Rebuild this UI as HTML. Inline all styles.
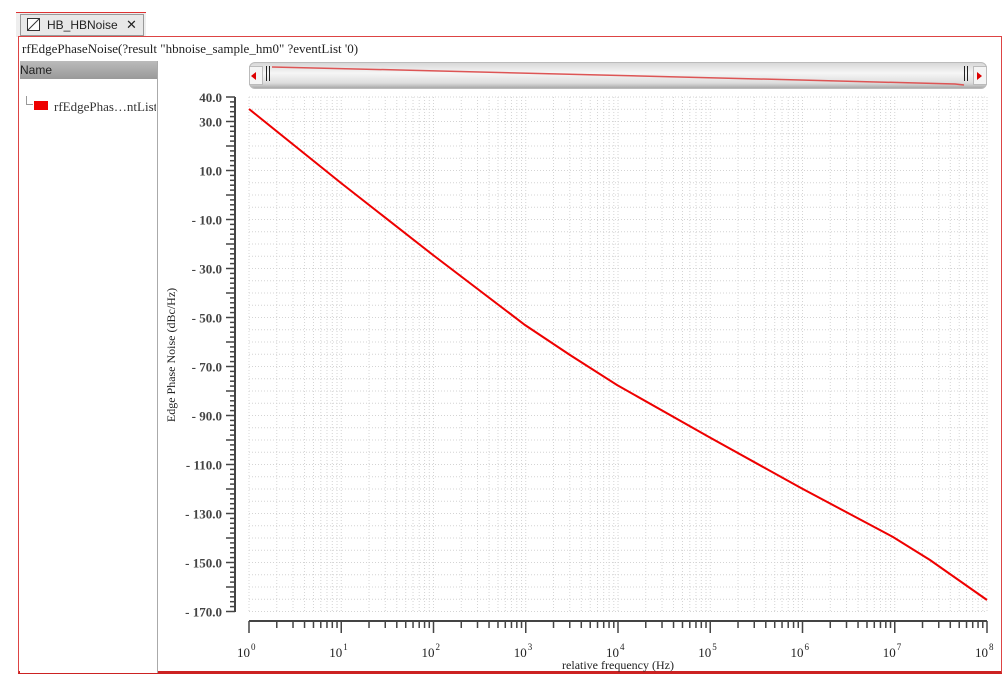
<!DOCTYPE html>
<html><head><meta charset="utf-8"><style>
body{margin:0;width:1003px;height:689px;background:#fff;overflow:hidden;font-family:"Liberation Serif",serif;position:relative}
.abs{position:absolute}
</style></head><body>
<div class="abs" style="left:0;top:0;width:1003px;height:38px;background:#fff"></div>
<div class="abs" style="left:16px;top:12px;width:130px;height:24px;border-top:1px solid #d33;background:#eee"></div>
<div class="abs" style="left:20px;top:14px;width:122px;height:20px;border:1px solid #999;background:#e8e8e8;font:12px 'Liberation Sans',sans-serif;color:#222">
 <svg class="abs" style="left:6px;top:3px" width="13" height="13"><rect x="0.5" y="0.5" width="12" height="12" fill="#fff" stroke="#333"/><path d="M1 12 L12 1" stroke="#333"/></svg>
 <span class="abs" style="left:26px;top:3px">HB_HBNoise</span><span class="abs" style="left:105px;top:2px;font-size:13px">✕</span></div>
<div class="abs" style="left:18px;top:36px;width:984px;height:638px;border:1px solid #d44;border-bottom:3px solid #c22;box-sizing:border-box"></div>
<div class="abs" style="left:22px;top:41px;font-size:13px;color:#222">rfEdgePhaseNoise(?result "hbnoise_sample_hm0" ?eventList '0)</div>
<div class="abs" style="left:20px;top:61px;width:137px;height:612px;border-right:1px solid #aaa;background:#fff"></div>
<div class="abs" style="left:20px;top:61px;width:137px;height:18px;background:linear-gradient(#bbb,#999);font:12px 'Liberation Sans',sans-serif;color:#222;line-height:18px">Name</div>
<div class="abs" style="left:26px;top:96px;width:6px;height:8px;border-left:1px solid #999;border-bottom:1px solid #999"></div>
<div class="abs" style="left:34px;top:101px;width:14px;height:9px;background:#e00"></div>
<div class="abs" style="left:54px;top:99px;font-size:13px;color:#333;width:102px;overflow:hidden;white-space:nowrap">rfEdgePhas…ntList</div>
<div class="abs" style="left:249px;top:62px;width:738px;height:27px;border-radius:6px;background:linear-gradient(#d8d8d8,#f6f6f6 40%,#ddd 80%,#aaa);border:1px solid #bbb;box-sizing:border-box"></div>
<div class="abs" style="left:249px;top:66px;width:14px;height:19px;background:#f4f4f4;border:1px solid #bbb;box-sizing:border-box"></div>
<div class="abs" style="left:251px;top:72px;width:0;height:0;border:4px solid transparent;border-right:5px solid #d00;border-left:0"></div>
<div class="abs" style="left:973px;top:66px;width:14px;height:19px;background:#f4f4f4;border:1px solid #bbb;box-sizing:border-box"></div>
<div class="abs" style="left:977px;top:72px;width:0;height:0;border:4px solid transparent;border-left:5px solid #d00;border-right:0"></div>
<div class="abs" style="left:266px;top:66px;width:2px;height:15px;border-left:1px solid #222;border-right:1px solid #222"></div>
<div class="abs" style="left:964px;top:66px;width:2px;height:15px;border-left:1px solid #222;border-right:1px solid #222"></div>
<svg class="abs" style="left:0;top:0" width="1003" height="689" id="s"></svg>
<script>
var s='',x0=249,dx=92.25,y0=97,dy=2.45;
function X(f){return x0+Math.log10(f)*dx}function Y(v){return y0+(40-v)*dy}
for(var v=40;v>=-170;v-=5)s+='<line x1="249" x2="987" y1="'+Y(v)+'" y2="'+Y(v)+'" stroke="#d4d4d4" stroke-dasharray="1,2"/>';
for(var d=0;d<8;d++)for(var m=1;m<10;m++){var x=X(m*Math.pow(10,d));s+='<line x1="'+x+'" x2="'+x+'" y1="97" y2="612" stroke="#d4d4d4" stroke-dasharray="1,2"/>';}
s+='<line x1="987" x2="987" y1="97" y2="612" stroke="#d4d4d4" stroke-dasharray="1,2"/>';
s+='<line x1="235" x2="235" y1="97" y2="612" stroke="#444" stroke-width="2"/>';
for(var v=40;v>=-170;v-=2){var y=Y(v);s+='<line x1="'+(v%10==0?226:230)+'" x2="235" y1="'+y+'" y2="'+y+'" stroke="#444" stroke-width="1.5"/>';}
var labs=[40,30,10,-10,-30,-50,-70,-90,-110,-130,-150,-170];
labs.forEach(function(v){var t=v>0?v+'.0':'- '+(-v)+'.0';s+='<text x="222" y="'+(Y(v)+5)+'" text-anchor="end" font-size="13" fill="#444" font-family="Liberation Serif" font-weight="bold">'+t+'</text>'});
s+='<line x1="249" x2="987" y1="621" y2="621" stroke="#444" stroke-width="2"/>';
for(var d=0;d<8;d++)for(var m=1;m<10;m++){var x=X(m*Math.pow(10,d));s+='<line x1="'+x+'" x2="'+x+'" y1="621" y2="'+(m==1?633:628)+'" stroke="#444" stroke-width="1.5"/>';}
s+='<line x1="987" x2="987" y1="621" y2="633" stroke="#444" stroke-width="1.5"/>';
for(var d=0;d<=8;d++){var x=X(Math.pow(10,d));s+='<text x="'+(x+1)+'" y="657" text-anchor="end" font-size="13" fill="#222">10</text><text x="'+(x+2)+'" y="650" font-size="9" fill="#222">'+d+'</text>'}
s+='<text x="618" y="669" text-anchor="middle" font-size="12" fill="#222">relative frequency (Hz)</text>';
s+='<text transform="translate(175,355) rotate(-90)" text-anchor="middle" font-size="12" fill="#222">Edge Phase Noise (dBc/Hz)</text>';
var p=[[249,109],[341,183],[433,255],[525,325],[570,355],[617,385],[709,437],[801,488],[893,537],[930,560],[987,600]];
s+='<polyline fill="none" stroke="#e00" stroke-width="2" points="'+p.map(function(a){return a.join(',')}).join(' ')+'"/>';
s+='<polyline fill="none" stroke="#d55" stroke-width="1.5" points="272,67 400,70 600,75 800,80 955,84 964,85"/>';
document.getElementById('s').innerHTML=s;
</script>
</body></html>
